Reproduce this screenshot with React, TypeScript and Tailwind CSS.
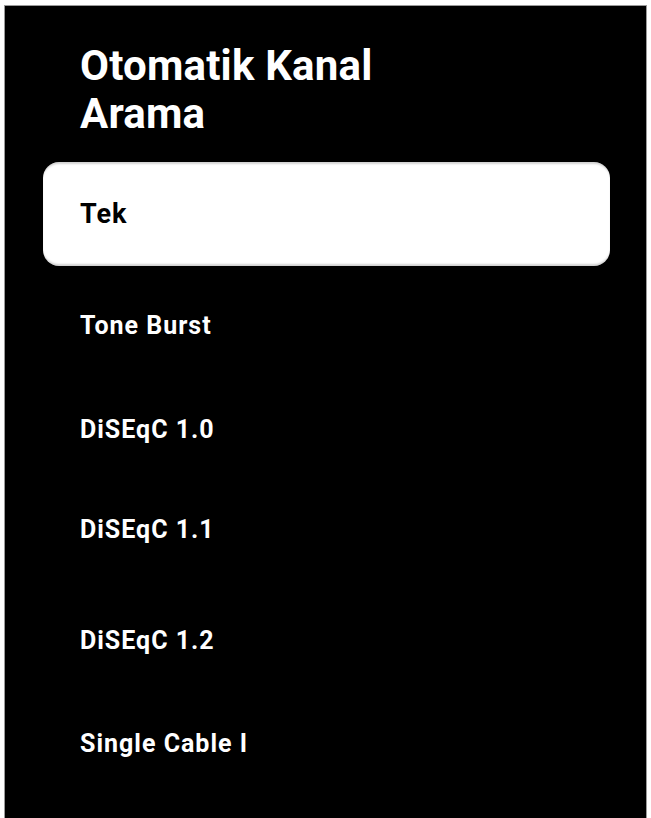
const options = [
  { label: 'Tek', h: 'h-[104px]', active: true },
  { label: 'Tone Burst', h: 'h-[119px]' },
  { label: 'DiSEqC 1.0', h: 'h-[90px]' },
  { label: 'DiSEqC 1.1', h: 'h-[110px]' },
  { label: 'DiSEqC 1.2', h: 'h-[111px]' },
  { label: 'Single Cable I', h: 'h-[95px]' },
]

export default function App() {
  return (
    <div className="min-h-[818px] bg-white px-[4px] pt-[5px] font-['Roboto',sans-serif]">
      <div className="h-[813px] overflow-hidden border border-b-0 border-[#9a9a9a] bg-black">
        <h1 className="pl-[75px] pt-[36px] text-[42px] font-bold leading-[48px] tracking-[0.2px] text-white">
          Otomatik Kanal
          <br />
          Arama
        </h1>

        <ul className="mt-[24px]">
          {options.map((o) => (
            <li
              key={o.label}
              className={
                o.active
                  ? `ml-[38px] mr-[36px] flex ${o.h} items-center rounded-[16px] bg-white pl-[37px] text-[27px] font-bold tracking-[1px] text-black shadow-[inset_0_3px_2px_-1px_rgba(0,0,0,0.18),inset_0_-3px_2px_-1px_rgba(0,0,0,0.18)]`
                  : `flex ${o.h} items-center pl-[75px] text-[25px] font-bold tracking-[1px] text-white`
              }
            >
              {o.label}
            </li>
          ))}
        </ul>
      </div>
    </div>
  )
}
